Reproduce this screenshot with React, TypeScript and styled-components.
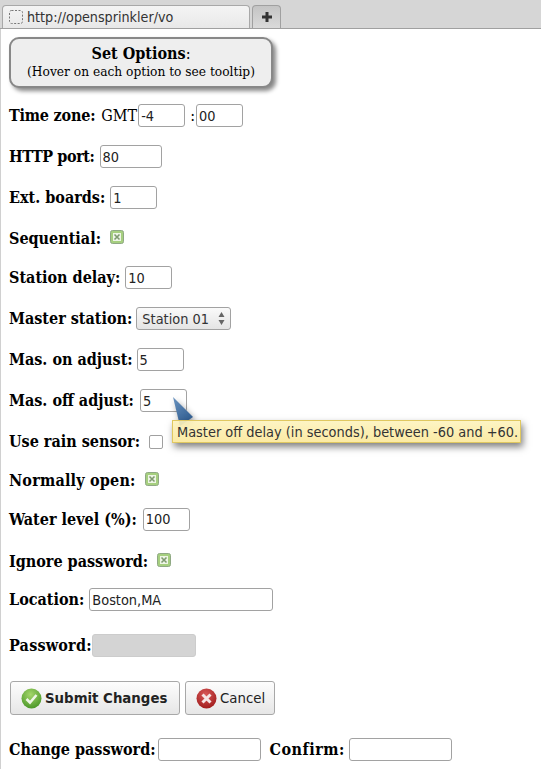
import { createGlobalStyle, styled } from "styled-components";

const GlobalStyle = createGlobalStyle`
  html, body {
    margin: 0;
    padding: 0;
    background: #fff;
  }
  body {
    width: 541px;
    height: 769px;
    overflow: hidden;
    font-family: "DejaVu Serif Condensed", "DejaVu Serif", serif;
    font-stretch: condensed;
  }
`;

const sansStack = `"DejaVu Sans Condensed", "DejaVu Sans", sans-serif`;

const Page = styled.div`
  position: relative;
  width: 541px;
  height: 769px;
  overflow: hidden;
`;

const TabBar = styled.div`
  display: flex;
  align-items: flex-end;
  gap: 2px;
  height: 29px;
  box-sizing: border-box;
  padding-left: 2px;
  background: #d6d6d6;
  border-bottom: 1px solid #a0a0a0;
`;

const Tab = styled.div`
  display: flex;
  align-items: center;
  gap: 4px;
  width: 248px;
  height: 23px;
  box-sizing: border-box;
  padding: 0 6px;
  background: linear-gradient(#f4f4f4, #e8e8e8);
  border: 1px solid #a8a8a8;
  border-bottom: none;
  border-radius: 4px 4px 0 0;
  font: 14.2px ${sansStack};
  font-stretch: condensed;
  color: #333;
`;

const NewTab = styled.div`
  display: flex;
  align-items: center;
  justify-content: center;
  width: 29px;
  height: 23px;
  box-sizing: border-box;
  background: linear-gradient(#c4c4c4, #dadada);
  border: 1px solid #a0a0a0;
  border-bottom: none;
  border-radius: 4px 4px 0 0;
`;

const Content = styled.div`
  height: 740px;
  box-sizing: border-box;
  padding: 8px 0 0 9px;
  border-left: 1px solid #d0d0d0;
`;

const Banner = styled.div`
  width: 264px;
  height: 51px;
  box-sizing: border-box;
  margin-left: -1px;
  padding-top: 5px;
  text-align: center;
  background: #eee;
  border: 2px solid #888;
  border-radius: 10px;
  box-shadow: 3px 3px 4px #888;
  color: #000;
  font-size: 16px;
  line-height: 20px;
`;

const BannerHint = styled.div`
  font-size: 13.6px;
  line-height: 15px;
`;

const Fields = styled.div`
  margin-top: 7px;
  margin-left: -1px;
`;

const Row = styled.div<{ $h?: number; $pt?: number }>`
  display: flex;
  align-items: center;
  height: ${(p) => p.$h ?? 41}px;
  box-sizing: border-box;
  padding-top: ${(p) => p.$pt ?? 0}px;
  font-size: 16px;
  color: #000;
  white-space: nowrap;
`;

const Label = styled.b<{ $ml?: number; $ls?: number }>`
  margin-left: ${(p) => p.$ml ?? 0}px;
  letter-spacing: ${(p) => p.$ls ?? 0}px;
  font-weight: 700;
`;

const Plain = styled.span<{ $ml?: number }>`
  margin-left: ${(p) => p.$ml ?? 0}px;
`;

const Field = styled.input<{ $w?: number; $ml?: number }>`
  width: ${(p) => p.$w ?? 47}px;
  height: 23px;
  box-sizing: border-box;
  margin: 0 0 0 ${(p) => p.$ml ?? 5}px;
  padding: 1px 2px;
  background: #fff;
  border: 1px solid #a2a2a2;
  border-radius: 3px;
  outline: none;
  color: #222;
  font: 14.4px ${sansStack};
  font-stretch: condensed;

  &:disabled {
    background: #d4d4d4;
    border-color: #ccc;
  }
`;

const SelectBox = styled.div`
  display: flex;
  align-items: center;
  justify-content: space-between;
  width: 95px;
  height: 23px;
  box-sizing: border-box;
  margin-left: 4px;
  padding: 0 5px 0 5px;
  background: linear-gradient(#fafafa, #e4e4e4);
  border: 1px solid #a2a2a2;
  border-radius: 3px;
  color: #333;
  font: 14.4px ${sansStack};
  font-stretch: condensed;
`;

const CheckWrap = styled.span`
  display: inline-flex;
  width: 14px;
  height: 14px;
  margin: -3px 0 0 9px;
`;

const EmptyCheck = styled.span`
  display: inline-block;
  width: 14px;
  height: 14px;
  box-sizing: border-box;
  margin: 0 0 0 9px;
  background: #fff;
  border: 1px solid #a0a0a0;
  border-radius: 2px;
`;

const Buttons = styled.div`
  display: flex;
  gap: 5px;
  height: 34px;
  margin-top: 10px;
  margin-bottom: 14px;
  margin-left: 1px;
`;

const Button = styled.div<{ $bold?: boolean; $w: number }>`
  display: flex;
  align-items: center;
  gap: 3px;
  width: ${(p) => p.$w}px;
  height: 34px;
  box-sizing: border-box;
  padding: 0 0 0 10px;
  background: linear-gradient(#fdfdfd, #e6e6e6);
  border: 1px solid #a8a8a8;
  border-radius: 3px;
  color: #222;
  font: ${(p) => (p.$bold ? "700" : "400")} 13.33px "DejaVu Sans", sans-serif;
`;

const Tooltip = styled.div`
  position: absolute;
  left: 172px;
  top: 420px;
  width: 349px;
  height: 23px;
  box-sizing: border-box;
  padding: 0 4px;
  display: flex;
  align-items: center;
  background: linear-gradient(rgba(253, 243, 189, 0.9), rgba(251, 232, 154, 0.9));
  border: 1px solid #e0c860;
  box-shadow: 2px 4px 7px rgba(0, 0, 0, 0.5);
  color: #333;
  font: 14.4px ${sansStack};
  font-stretch: condensed;
  white-space: nowrap;
`;

const TooltipArrow = styled.svg`
  position: absolute;
  left: 171px;
  top: 396px;
  filter: drop-shadow(2px 3px 3px rgba(0, 0, 0, 0.4));
`;

function Checked() {
  return (
    <CheckWrap>
      <svg width="14" height="14" viewBox="0 0 14 14">
        <rect x="0.5" y="0.5" width="13" height="13" rx="2" fill="#a6cf7f" stroke="#8fa884" />
        <rect x="3" y="3" width="8" height="8" fill="#eef5e6" />
        <path d="M4.5 4.5l5 5M9.5 4.5l-5 5" stroke="#7f9a70" strokeWidth="1.6" />
      </svg>
    </CheckWrap>
  );
}

export default function App() {
  return (
    <Page>
      <GlobalStyle />
      <TabBar>
        <Tab>
          <svg width="14" height="14" viewBox="0 0 14 14">
            <rect x="0.5" y="0.5" width="13" height="13" rx="2" fill="none" stroke="#777" strokeDasharray="2 1.5" />
          </svg>
          http://opensprinkler/vo
        </Tab>
        <NewTab>
          <svg width="12" height="12" viewBox="0 0 12 12">
            <path d="M4.5 1h3v3.5H11v3H7.5V11h-3V7.5H1v-3h3.5z" fill="#333" />
          </svg>
        </NewTab>
      </TabBar>
      <Content>
        <Banner>
          <Label>Set Options</Label>:
          <BannerHint>(Hover on each option to see tooltip)</BannerHint>
        </Banner>
        <Fields>
          <Row>
            <Label $ls={-0.2}>Time zone:</Label>
            <Plain $ml={6}>GMT</Plain>
            <Field $ml={1} defaultValue="-4" />
            <Plain $ml={5}>:</Plain>
            <Field $ml={1} defaultValue="00" />
          </Row>
          <Row>
            <Label $ls={-0.4}>HTTP port:</Label>
            <Field $w={62} defaultValue="80" />
          </Row>
          <Row>
            <Label>Ext. boards:</Label>
            <Field defaultValue="1" />
          </Row>
          <Row $h={39} $pt={2}>
            <Label>Sequential:</Label>
            <Checked />
          </Row>
          <Row>
            <Label>Station delay:</Label>
            <Field defaultValue="10" />
          </Row>
          <Row>
            <Label>Master station:</Label>
            <SelectBox>
              Station 01
              <svg width="7" height="15" viewBox="0 0 7 15">
                <path d="M3.5 1L6.5 6H0.5zM3.5 14L0.5 9H6.5z" fill="#666" />
              </svg>
            </SelectBox>
          </Row>
          <Row>
            <Label>Mas. on adjust:</Label>
            <Field $ml={4} defaultValue="5" />
          </Row>
          <Row>
            <Label>Mas. off adjust:</Label>
            <Field $ml={6} defaultValue="5" />
          </Row>
          <Row $h={39} $pt={2}>
            <Label>Use rain sensor:</Label>
            <EmptyCheck />
          </Row>
          <Row $h={39} $pt={2}>
            <Label $ls={0.2}>Normally open:</Label>
            <Checked />
          </Row>
          <Row $h={40}>
            <Label>Water level (%):</Label>
            <Field $ml={6} defaultValue="100" />
          </Row>
          <Row $h={40} $pt={4}>
            <Label>Ignore password:</Label>
            <Checked />
          </Row>
          <Row $h={41}>
            <Label>Location:</Label>
            <Field $w={184} defaultValue="Boston,MA" />
          </Row>
          <Row $h={51}>
            <Label $ls={0.2}>Password:</Label>
            <Field $w={104} $ml={0} disabled />
          </Row>
          <Buttons>
            <Button $bold $w={170}>
              <svg width="21" height="21" viewBox="0 0 21 21">
                <defs>
                  <radialGradient id="okFill" cx="0.45" cy="0.3" r="0.8">
                    <stop offset="0" stopColor="#a4d66a" />
                    <stop offset="1" stopColor="#3f8f20" />
                  </radialGradient>
                </defs>
                <circle cx="10.5" cy="10.5" r="10" fill="url(#okFill)" />
                <path d="M5.5 11l3.5 3.5 6.5-7.5" fill="none" stroke="#eef6e6" strokeWidth="2.6" />
              </svg>
              Submit Changes
            </Button>
            <Button $w={90}>
              <svg width="21" height="21" viewBox="0 0 21 21">
                <defs>
                  <radialGradient id="noFill" cx="0.45" cy="0.3" r="0.8">
                    <stop offset="0" stopColor="#d85a5a" />
                    <stop offset="1" stopColor="#9a1414" />
                  </radialGradient>
                </defs>
                <circle cx="10.5" cy="10.5" r="10" fill="url(#noFill)" />
                <path d="M6.5 6.5l8 8M14.5 6.5l-8 8" stroke="#f6e6e6" strokeWidth="3" />
              </svg>
              Cancel
            </Button>
          </Buttons>
          <Row>
            <Label>Change password:</Label>
            <Field $w={103} $ml={2} />
            <Label $ml={9} $ls={0.5}>Confirm:</Label>
            <Field $ml={4} $w={103} />
          </Row>
        </Fields>
      </Content>
      <TooltipArrow width="26" height="32" viewBox="0 0 26 32">
        <defs>
          <linearGradient id="arrowFill" x1="0" y1="0" x2="0.6" y2="1">
            <stop offset="0" stopColor="#6a93bf" />
            <stop offset="1" stopColor="#2f5c90" />
          </linearGradient>
        </defs>
        <path d="M2 1L22 21L9 30z" fill="url(#arrowFill)" />
      </TooltipArrow>
      <Tooltip>Master off delay (in seconds), between -60 and +60.</Tooltip>
    </Page>
  );
}
